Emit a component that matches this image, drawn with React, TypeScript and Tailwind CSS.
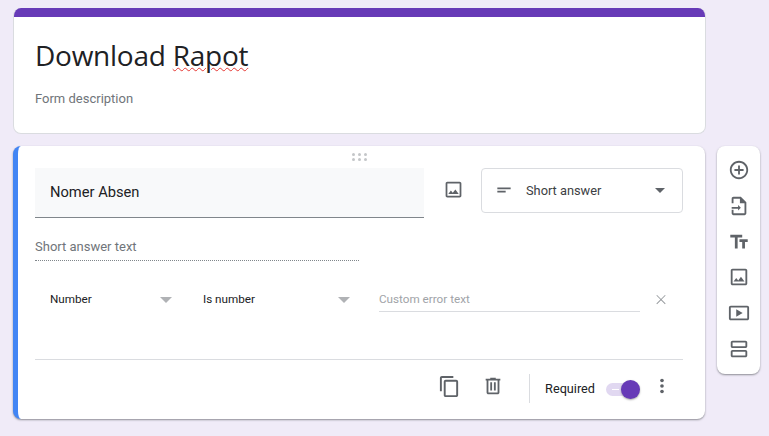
import { PropsWithChildren } from 'react';

function Icon({ children, className }: PropsWithChildren<{ className: string }>) {
  return (
    <svg viewBox="0 0 24 24" fill="currentColor" className={className}>
      {children}
    </svg>
  );
}

const imagePath =
  'M19 5v14H5V5h14m0-2H5c-1.1 0-2 .9-2 2v14c0 1.1.9 2 2 2h14c1.1 0 2-.9 2-2V5c0-1.1-.9-2-2-2zm-4.86 8.86l-3 3.87L9 13.14 6 17h12l-3.86-5.14z';

const sideIcons = [
  <path key="add" d="M13 7h-2v4H7v2h4v4h2v-4h4v-2h-4V7zm-1-5C6.48 2 2 6.48 2 12s4.48 10 10 10 10-4.48 10-10S17.52 2 12 2zm0 18c-4.41 0-8-3.59-8-8s3.59-8 8-8 8 3.59 8 8-3.59 8-8 8z" />,
  <path key="import" d="M14 2H6c-1.1 0-2 .9-2 2v5h2V4h7v5h5v11H6v-4H4v4c0 1.1.9 2 2 2h12c1.1 0 2-.9 2-2V8l-6-6zM11 15H4v-2h7v-2l3 3-3 3z" />,
  <path key="title" d="M2.5 4v3h5v12h3V7h5V4h-13zm19 5h-9v3h3v7h3v-7h3V9z" />,
  <path key="image" d={imagePath} />,
  <path key="video" d="M21 4H3c-1.1 0-2 .9-2 2v12c0 1.1.9 2 2 2h18c1.1 0 2-.9 2-2V6c0-1.1-.9-2-2-2zm0 14H3V6h18v12zM9 8v8l7-4z" />,
  <path key="section" d="M19 3H5c-1.1 0-2 .9-2 2v4c0 1.1.9 2 2 2h14c1.1 0 2-.9 2-2V5c0-1.1-.9-2-2-2zm0 6H5V5h14v4zm0 4H5c-1.1 0-2 .9-2 2v4c0 1.1.9 2 2 2h14c1.1 0 2-.9 2-2v-4c0-1.1-.9-2-2-2zm0 6H5v-4h14v4z" />,
];

export default function App() {
  return (
    <div className="flex h-[436px] w-[769px] gap-3 overflow-hidden bg-[#f0ebf8] pl-[13px] pt-2 font-['Roboto',sans-serif]">
      <div className="flex w-[692px] shrink-0 flex-col gap-[12px]">
        <div className="-mr-px h-[126px] overflow-hidden rounded-lg border border-t-0 border-[#dadce0] bg-white">
          <div className="h-[9px] bg-[#673ab7]" />
          <div className="pl-[21px] pt-[13px]">
            <div className="font-['Open_Sans',sans-serif] text-[28px] leading-[50px] tracking-[-0.25px] text-[#202124]">
              Download{' '}
              <span className="underline decoration-[#e53935] decoration-wavy decoration-1 underline-offset-1">Rapot</span>
            </div>
            <div className="mt-[9px] text-[13px] leading-5 text-[#70757a]">Form description</div>
          </div>
        </div>

        <div className="h-[273px] rounded-lg border-l-[5px] border-l-[#4285f4] bg-white pl-[17px] pr-[22px] shadow-[0_1px_2px_rgba(60,64,67,0.55)]">
          <div className="flex h-[22px] items-start justify-center pl-[1px] pt-[7px]">
            <div className="grid grid-cols-3 gap-x-[3px] gap-y-[2px]">
              {Array.from({ length: 6 }).map((_, i) => (
                <div key={i} className="h-[3px] w-[3px] rounded-full bg-[#c4c6c9]" />
              ))}
            </div>
          </div>

          <div className="flex items-start">
            <div className="flex h-[50px] w-[389px] items-center border-b border-[#80868b] bg-[#f8f9fa] pl-[15px] text-[14.7px] text-[#202124]">
              Nomer Absen
            </div>
            <div className="flex h-[42px] w-[57px] items-center justify-center pl-px">
              <Icon className="h-[21px] w-[21px] text-[#5f6368]">
                <path d={imagePath} />
              </Icon>
            </div>
            <div className="flex h-[45px] w-[202px] items-center rounded border border-[#dadce0] pl-[12px] pr-[17px]">
              <Icon className="h-[20px] w-[20px] -translate-y-[1px] text-[#5f6368]">
                <path d="M4 9h16v2H4zm0 4h10v2H4z" />
              </Icon>
              <span className="ml-[12px] flex-1 text-[12.8px] text-[#3c4043]">Short answer</span>
              <div className="h-0 w-0 border-x-[5px] border-t-[5px] border-x-transparent border-t-[#5f6368]" />
            </div>
          </div>

          <div className="mt-[21px] h-[22px] w-[324px] border-b border-dotted border-[#80868b] text-[13px] leading-[16px] text-[#70757a]">
            Short answer text
          </div>

          <div className="mt-[27px] flex h-[24px] items-center">
            <div className="flex w-[153px] items-center pl-[15px]">
              <span className="flex-1 text-[11.7px] text-[#202124]">Number</span>
              <div className="mr-[16px] h-0 w-0 border-x-[6px] border-t-[6px] border-x-transparent border-t-[#b0b2b5]" />
            </div>
            <div className="flex w-[191px] items-center pl-[15px]">
              <span className="flex-1 text-[11.7px] text-[#202124]">Is number</span>
              <div className="mr-[29px] h-0 w-0 border-x-[6px] border-t-[6px] border-x-transparent border-t-[#b0b2b5]" />
            </div>
            <div className="flex h-[23px] w-[261px] items-center border-b border-[#dadce0] text-[11.7px] text-[#a0a3a7]">
              Custom error text
            </div>
            <Icon className="ml-[11px] h-[20px] w-[20px] text-[#909498]">
              <path d="M17.5 6.7 16.8 6 12 10.8 7.2 6l-.7.7 4.8 4.8-4.8 4.8.7.7 4.8-4.8 4.8 4.8.7-.7-4.8-4.8z" />
            </Icon>
          </div>

          <div className="mt-[47px] flex h-[59px] items-center border-t border-[#dadce0]">
            <div className="flex-1" />
            <Icon className="mr-[21px] h-[23px] w-[23px] -translate-y-[3px] text-[#5f6368]">
              <path d="M16 1H4c-1.1 0-2 .9-2 2v14h2V3h12V1zm3 4H8c-1.1 0-2 .9-2 2v14c0 1.1.9 2 2 2h11c1.1 0 2-.9 2-2V7c0-1.1-.9-2-2-2zm0 16H8V7h11v14z" />
            </Icon>
            <Icon className="mr-[25px] h-[22px] w-[22px] -translate-y-[3px] text-[#5f6368]">
              <path d="M15 4V3H9v1H4v2h1v13c0 1.1.9 2 2 2h10c1.1 0 2-.9 2-2V6h1V4h-5zm2 15H7V6h10v13zM9 8h2v9H9zm4 0h2v9h-2z" />
            </Icon>
            <div className="h-[29px] w-px -translate-y-px bg-[#dadce0]" />
            <span className="ml-[15px] text-[12.7px] text-[#202124]">Required</span>
            <div className="relative ml-[11px] h-[13px] w-[24px] rounded-full bg-[#e1d8f1]">
              <div className="absolute left-[6px] top-[6px] h-px w-[7px] bg-white" />
              <div className="absolute -right-[10px] -top-[3px] h-[19px] w-[19px] rounded-full bg-[#673ab7] shadow-[0_1px_2px_rgba(0,0,0,0.35)]" />
            </div>
            <Icon className="ml-[21px] h-[22px] w-[22px] -translate-y-[3px] text-[#5f6368]">
              <circle cx="12" cy="6" r="2" />
              <circle cx="12" cy="12" r="2" />
              <circle cx="12" cy="18" r="2" />
            </Icon>
            <div className="w-[10px]" />
          </div>
        </div>
      </div>

      <div className="mt-[138px] flex h-[228px] w-[43px] shrink-0 flex-col items-center gap-[13.8px] rounded-lg bg-white pt-[13px] shadow-[0_1px_2px_rgba(60,64,67,0.55)]">
        {sideIcons.map((icon, i) => (
          <Icon key={i} className="h-[22px] w-[22px] text-[#5f6368]">
            {icon}
          </Icon>
        ))}
      </div>
    </div>
  );
}
